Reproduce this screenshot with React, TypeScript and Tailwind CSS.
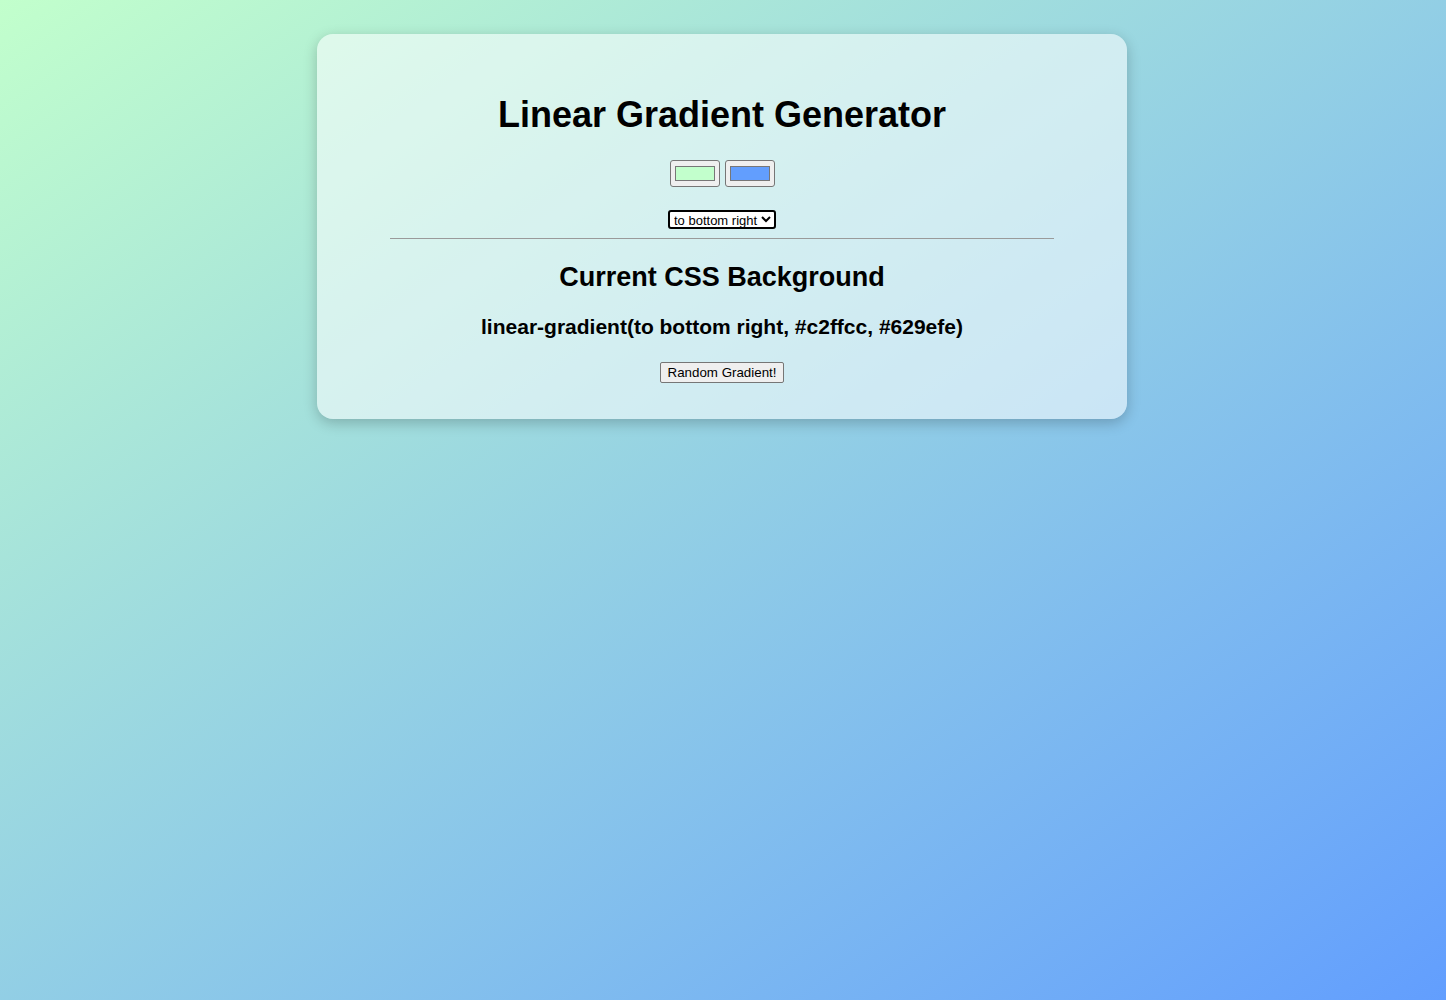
import { useState } from "react";

export default function App() {
  const [c1] = useState("#c2ffcc");
  const [c2] = useState("#629efe");
  const [dir] = useState("to bottom right");
  const bg = `linear-gradient(${dir}, ${c1}, ${c2})`;

  return (
    <div
      className="min-h-screen w-full pt-[34px] pr-[2px] font-['Liberation_Sans',Arial,sans-serif] text-black"
      style={{ background: bg }}
    >
      <div className="mx-auto flex w-[810px] flex-col items-center rounded-[16px] bg-white/55 pt-[60px] pb-[36px] shadow-[0_4px_14px_rgba(0,0,0,0.22)]">
        <h1 className="text-[36px] font-bold leading-[42px]">Linear Gradient Generator</h1>

        <div className="mt-[24px] flex gap-[5px]">
          {[c1, c2].map((c) => (
            <div
              key={c}
              className="flex h-[27px] w-[50px] items-center justify-center rounded-[3px] border border-[#767676] bg-[#efefef]"
            >
              <div className="h-[15px] w-[40px] border border-[#777]" style={{ background: c }} />
            </div>
          ))}
        </div>

        <select
          defaultValue={dir}
          className="mt-[23px] h-[19px] rounded-[3px] border-2 border-black bg-white px-0 text-[13px] leading-[15px] text-black"
        >
          <option>to right</option>
          <option>to left</option>
          <option>to top</option>
          <option>to bottom</option>
          <option>to bottom right</option>
        </select>

        <hr className="mt-[9px] w-[664px] border-t border-[#9a9a9a]" />

        <h2 className="mt-[22px] text-[27px] font-bold leading-[32px]">Current CSS Background</h2>

        <h3 className="mt-[22px] text-[21px] font-bold leading-[24px]">{bg}</h3>

        <button className="mt-[23px] h-[21px] rounded-[2px] border border-[#767676] bg-[#efefef] px-[7px] text-[13.33px] leading-[15px]">
          Random Gradient!
        </button>
      </div>
    </div>
  );
}
